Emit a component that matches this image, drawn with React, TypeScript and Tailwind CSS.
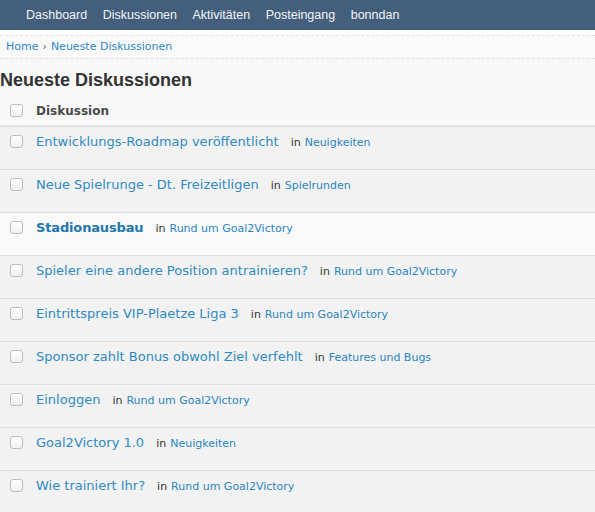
import React from 'react';

type Discussion = {
  title: string;
  category: string;
  unread?: boolean;
};

const navItems = ['Dashboard', 'Diskussionen', 'Aktivitäten', 'Posteingang', 'bonndan'];

const discussions: Discussion[] = [
  { title: 'Entwicklungs-Roadmap veröffentlicht', category: 'Neuigkeiten' },
  { title: 'Neue Spielrunge - Dt. Freizeitligen', category: 'Spielrunden' },
  { title: 'Stadionausbau', category: 'Rund um Goal2Victory', unread: true },
  { title: 'Spieler eine andere Position antrainieren?', category: 'Rund um Goal2Victory' },
  { title: 'Eintrittspreis VIP-Plaetze Liga 3', category: 'Rund um Goal2Victory' },
  { title: 'Sponsor zahlt Bonus obwohl Ziel verfehlt', category: 'Features und Bugs' },
  { title: 'Einloggen', category: 'Rund um Goal2Victory' },
  { title: 'Goal2Victory 1.0', category: 'Neuigkeiten' },
  { title: 'Wie trainiert Ihr?', category: 'Rund um Goal2Victory' },
];

const Checkbox: React.FC = () => (
  <span className="block w-[13px] h-[13px] shrink-0 rounded-[3px] border border-[#bcbcbc] bg-gradient-to-b from-white to-[#f1f1f1]" />
);

export default function App() {
  return (
    <div className="min-h-[512px] bg-[#f8f8f8] font-['DejaVu_Sans',sans-serif] text-[#333]">
      <nav className="h-[30px] bg-[#445f7b] flex items-center pl-[26px] gap-[15.5px] font-['Liberation_Sans',Arial,sans-serif] text-[12.5px] text-[#f2f4f6]">
        {navItems.map((item) => (
          <a key={item} href="#">{item}</a>
        ))}
      </nav>

      <div className="bg-white pt-[5px]">
        <div className="h-[24px] pt-[1px] border-y border-dashed border-[#e2e2e2] bg-[#f9f9f9] flex items-center px-[6px] text-[11px] text-[#2c8ac4]">
          <a href="#">Home</a>
          <span className="mx-[4px] text-[#666]">›</span>
          <a href="#">Neueste Diskussionen</a>
        </div>
      </div>

      <h1 className="mt-[10px] h-[23px] font-['Liberation_Sans',Arial,sans-serif] text-[18px] font-bold leading-[23px] text-[#333]">
        Neueste Diskussionen
      </h1>

      <div className="mt-[4px] h-[31px] flex items-start pt-[8px] pl-[10px] border-b-2 border-[#e0e0e0]">
        <Checkbox />
        <span className="ml-[13px] mt-[1px] text-[12px] font-bold leading-[13px] text-[#4a4a4a]">Diskussion</span>
      </div>

      <ul>
        {discussions.map((d) => (
          <li
            key={d.title}
            className={`h-[43px] border-b border-[#dedede] flex items-start pt-[8px] pl-[10px] ${d.unread ? 'bg-[#f9f9f9]' : 'bg-[#f2f2f2]'}`}
          >
            <Checkbox />
            <div className="ml-[13px] flex items-baseline -mt-[1px]">
              <a
                href="#"
                className={`text-[13px] leading-[16px] ${d.unread ? 'font-bold tracking-[-0.15px] text-[#1f77ad]' : 'text-[#2f8ac2]'}`}
              >
                {d.title}
              </a>
              <span className="ml-[12px] text-[11px] text-[#333]">in</span>
              <a href="#" className="ml-[4px] text-[11px] text-[#2b85bf]">
                {d.category}
              </a>
            </div>
          </li>
        ))}
      </ul>
    </div>
  );
}
